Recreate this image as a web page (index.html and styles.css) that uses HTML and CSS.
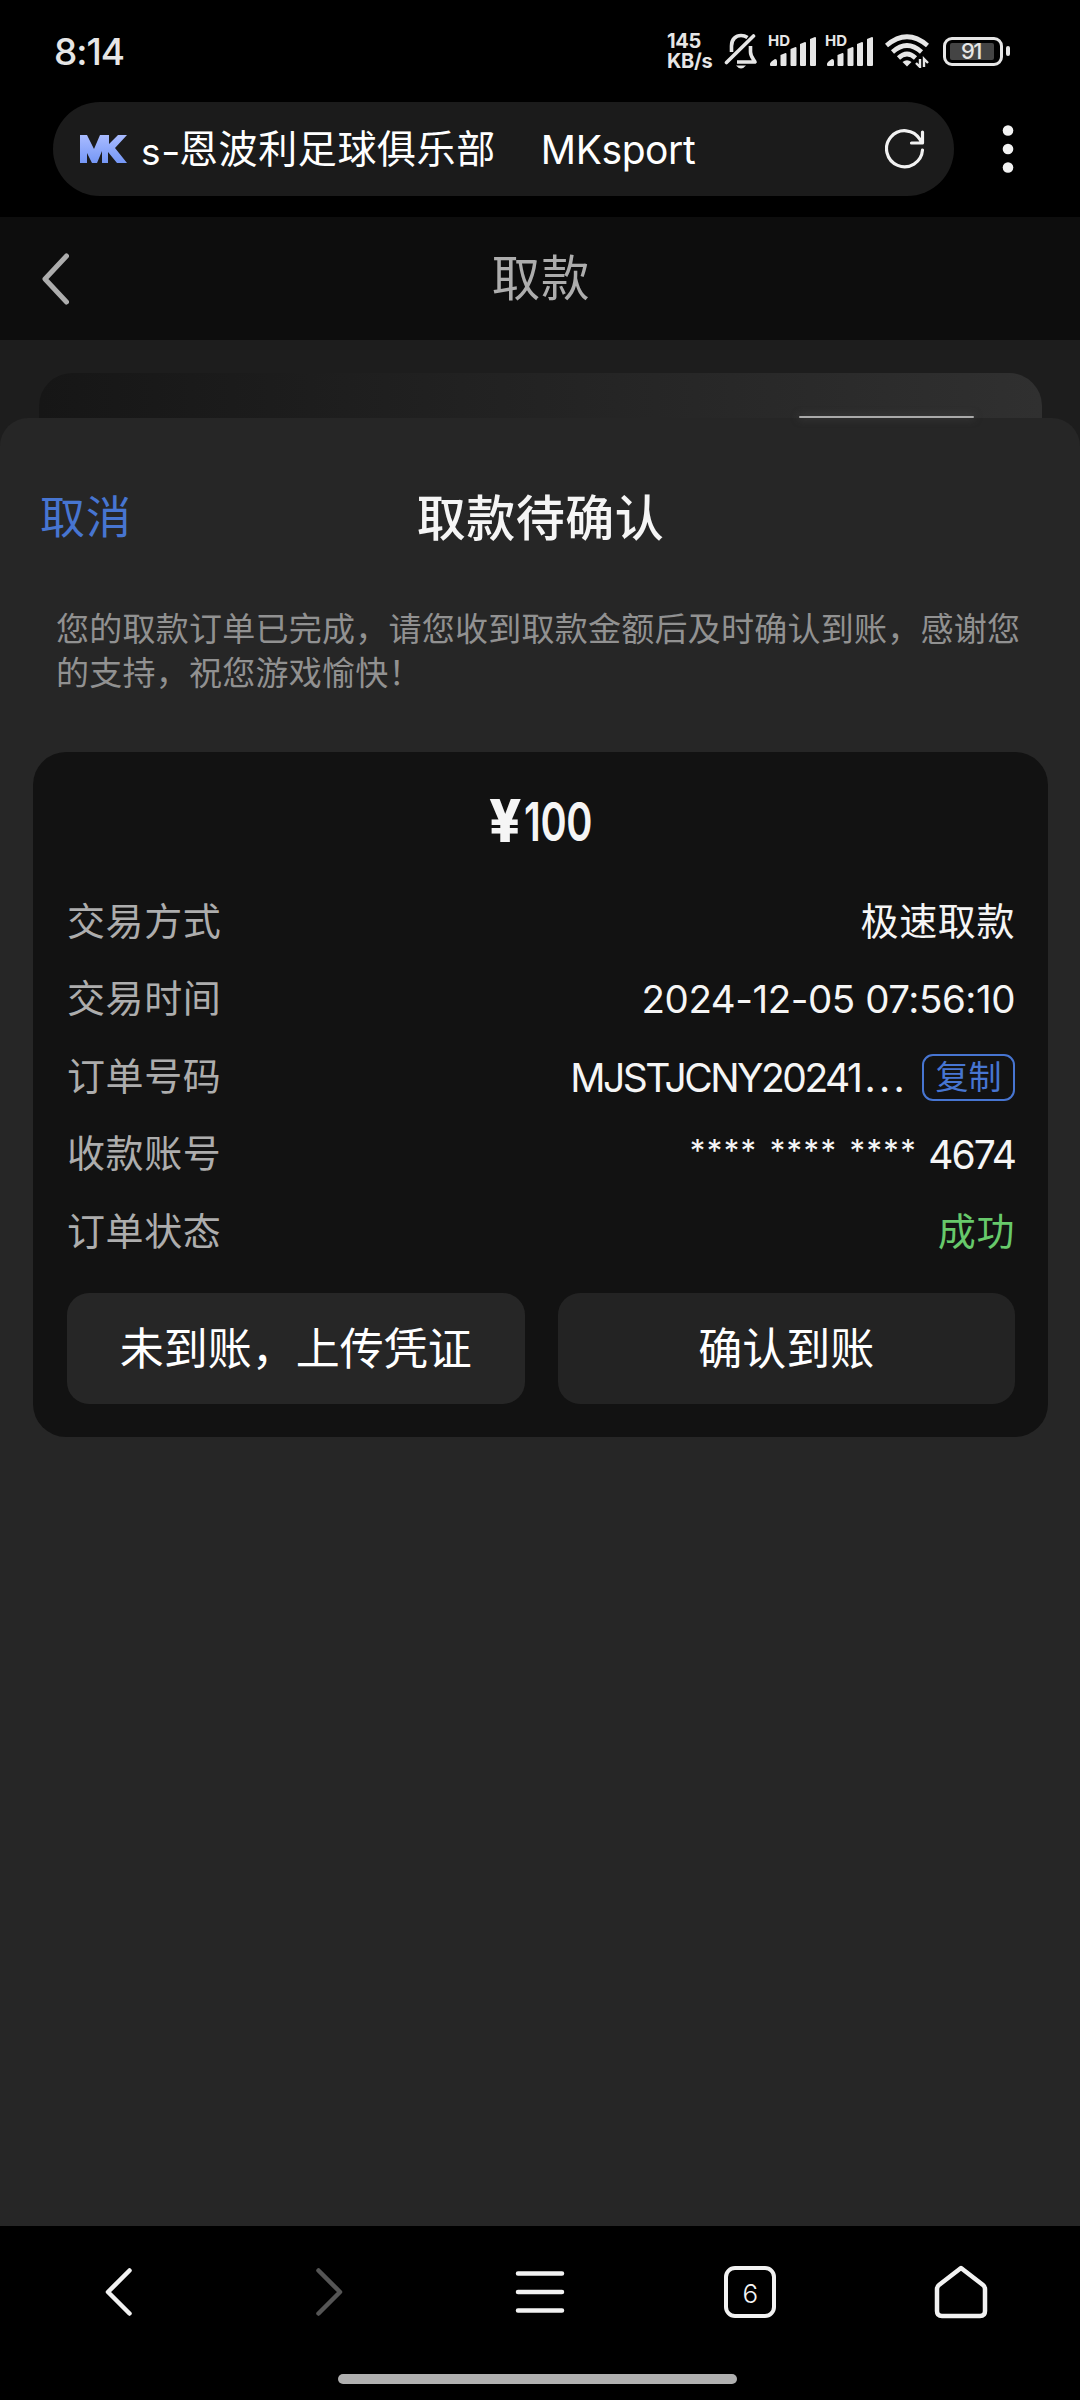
FILE: index.html
```html
<!DOCTYPE html>
<html lang="zh-CN">
<head>
<meta charset="utf-8">
<title>取款</title>
<link rel="stylesheet" href="styles.css">
</head>
<body>
<div class="screen">
  <div class="status">
    <span class="clock">8:14</span>
    <div class="status-icons">
      <div class="speed"><span>145</span><span>KB/s</span></div>
      <svg class="bell" width="34" height="38" viewBox="0 0 34 38" fill="none" stroke="#e6e6e6" stroke-width="3.6" stroke-linecap="round" stroke-linejoin="round">
        <path d="M7.500 20V14C7.500 7 12 3.500 17 3.500c3 0 4.500.6 6.500 2M26.500 14v6c0 4 2 6 4.500 10H13" stroke-linecap="butt"/>
        <path d="M2.500 30.500L29.500 4"/><path d="M12 33.500h10q-5 6-10 0z" fill="#e6e6e6" stroke="none"/>
      </svg>
      <div class="signal"><span class="hd">HD</span><svg width="48" height="32" viewBox="0 0 48 32" fill="#e6e6e6"><path d="M2 29q0-2 5-5q2 0 2 2v4q0 1-1 1H3q-1 0-1-1zM12.500 20l5-2q1 0 1 1v11q0 1-1 1h-4q-1 0-1-1zM22.500 14l5-2q1 0 1 1v17q0 1-1 1h-4q-1 0-1-1zM32 9l5-2q1 0 1 1v22q0 1-1 1h-4q-1 0-1-1zM42 4l5-2q1 0 1 1v27q0 1-1 1h-4q-1 0-1-1z"/></svg></div>
      <div class="signal"><span class="hd">HD</span><svg width="48" height="32" viewBox="0 0 48 32" fill="#e6e6e6"><path d="M2 29q0-2 5-5q2 0 2 2v4q0 1-1 1H3q-1 0-1-1zM12.500 20l5-2q1 0 1 1v11q0 1-1 1h-4q-1 0-1-1zM22.500 14l5-2q1 0 1 1v17q0 1-1 1h-4q-1 0-1-1zM32 9l5-2q1 0 1 1v22q0 1-1 1h-4q-1 0-1-1zM42 4l5-2q1 0 1 1v27q0 1-1 1h-4q-1 0-1-1z"/></svg></div>
      <svg class="wifi" width="44" height="34" viewBox="0 0 44 34" fill="none" stroke="#e6e6e6" stroke-width="4.6">
        <path d="M1.500 11.500Q22-6 42.500 11.500M7.500 18Q22 5 36.500 18M13.500 24Q22 16 30.500 24"/>
        <path d="M17.500 28q4.500-3.500 9 0L22 32.500z" fill="#e6e6e6" stroke="none"/>
        <path d="M35 25v8l-4-4M39 33v-8l4 4" stroke-width="2.400"/>
      </svg>
      <div class="battery"><div class="cell"><span>91</span></div><i></i></div>
    </div>
  </div>

  <div class="browser-bar">
    <div class="url">
      <svg width="48" height="28" viewBox="0 0 48 28"><defs><linearGradient id="mk" x1="0" y1="0" x2="0" y2="1"><stop offset="0" stop-color="#a9bbff"/><stop offset="1" stop-color="#7597f6"/></linearGradient></defs><path fill="url(#mk)" d="M0 0h7l7 14 6-14h9v9L38 0h9L35 13l12 15H37l-9-11v11h-6V16l-5 12h-5L7 18v10H0z"/></svg>
      <span class="url-text"><span class="s">s<span class="dash">-</span></span><span class="club">恩波利足球俱乐部</span></span>
      <span class="site">MKsport</span>
      <svg class="reload" width="40" height="40" viewBox="0 0 40 40" fill="none" stroke="#f2f2f2" stroke-width="3.2" stroke-linecap="round" stroke-linejoin="round"><path d="M37.500 21A18 18 0 1 1 35 10.500l2 3M37.500 3v11H26.500"/></svg>
    </div>
    <svg class="more" width="12" height="48" viewBox="0 0 12 48" fill="#f2f2f2"><circle cx="6" cy="5.500" r="5.300"/><circle cx="6" cy="24" r="5.300"/><circle cx="6" cy="42.500" r="5.300"/></svg>
  </div>

  <header class="page-head">
    <svg width="30" height="52" viewBox="0 0 30 52" fill="none" stroke="#adadad" stroke-width="5" stroke-linecap="round" stroke-linejoin="round"><path d="M27.500 3L6 26l21.500 23"/></svg>
    <h1>取款</h1>
  </header>

  <main class="page">
    <div class="bank-card"><i></i></div>
    <section class="sheet">
      <div class="sheet-head"><a class="cancel">取消</a><h2>取款待确认</h2></div>
      <p class="notice">您的取款订单已完成，请您收到取款金额后及时确认到账，感谢您的支持，祝您游戏愉快！</p>
      <div class="order">
        <div class="amount"><span class="yen">¥</span><span class="num">100</span></div>
        <dl>
          <div class="row"><dt>交易方式</dt><dd class="cn">极速取款</dd></div>
          <div class="row"><dt>交易时间</dt><dd class="date">2024-12-05 07:56:10</dd></div>
          <div class="row"><dt>订单号码</dt><dd><span class="code">MJSTJCNY20241<span class="dots">...</span></span><button class="copy">复制</button></dd></div>
          <div class="row"><dt>收款账号</dt><dd><span class="stars">**** **** ****</span><span class="last">4674</span></dd></div>
          <div class="row"><dt>订单状态</dt><dd class="cn ok">成功</dd></div>
        </dl>
        <div class="actions"><button class="btn">未到账，上传凭证</button><button class="btn second">确认到账</button></div>
      </div>
    </section>
  </main>

  <footer class="bottom">
    <nav>
      <svg width="56" height="56" viewBox="0 0 56 56"><path d="M38.500 6.500L17 28l21.500 21.500"/></svg>
      <svg class="off" width="56" height="56" viewBox="0 0 56 56"><path d="M16.500 6.500L38 28 16.500 49.500"/></svg>
      <svg width="56" height="56" viewBox="0 0 56 56"><path d="M6 9.500h44M6 28h44M6 46.500h44"/></svg>
      <div class="tabs"><span>6</span></div>
      <svg width="56" height="56" viewBox="0 0 56 56"><path d="M28 4L50 21q2 1.500 2 4v22q0 5-5 5H9q-5 0-5-5V25q0-2.500 2-4z"/></svg>
    </nav>
    <div class="handle"></div>
  </footer>
</div>
</body>
</html>
```
FILE: styles.css
```css
* { box-sizing: border-box; }
body { margin: 0; background: #000; font-family: Inter, "Noto Sans CJK SC", sans-serif; color: #f5f5f5; }
h1, h2, p, dl, dd { margin: 0; font-weight: 400; }
button { font: inherit; color: inherit; border: 0; padding: 0; background: none; }
svg { flex: none; display: block; }
.screen { width: 1080px; height: 2400px; display: flex; flex-direction: column; overflow: hidden; }

.status { height: 102px; padding: 0 70px 0 54px; display: flex; justify-content: space-between; align-items: center; color: #e6e6e6; }
.clock { font-size: 37px; font-weight: 500; letter-spacing: -1px; }
.status-icons { display: flex; align-items: center; }
.speed { display: flex; flex-direction: column; gap: 1px; font-size: 20px; line-height: 19px; font-weight: 700; letter-spacing: -0.3px; width: 57px; }
.bell { margin-right: -1px; }
.signal { position: relative; width: 48px; margin-left: 11px; }
.signal + .signal { margin-left: 9px; }
.hd { position: absolute; left: 0; top: 0; font-size: 15px; line-height: 12px; font-weight: 700; }
.wifi { margin-left: 12px; }
.battery { display: flex; align-items: center; margin-left: 14px; gap: 3px; }
.cell { width: 60px; height: 29px; border: 3px solid #e6e6e6; border-radius: 9px; padding: 3px 4px; }
.cell span { display: block; width: 44px; height: 17px; background: #444; font-size: 22px; line-height: 17px; font-weight: 500; letter-spacing: -1.5px; padding-left: 11px; border-radius: 2px; }
.battery i { width: 4px; height: 10px; border-radius: 2px; background: #e6e6e6; }

.browser-bar { height: 115px; padding-left: 53px; display: flex; align-items: flex-start; }
.url { width: 901px; height: 94px; border-radius: 47px; background: #1b1b1b; padding: 0 29px 0 27px; display: flex; align-items: center; color: #fff; }
.url-text { margin-left: 13px; display: flex; align-items: center; font-size: 39px; }
.s { font-size: 37px; width: 38px; padding-top: 4px; display: flex; }
.dash { transform: scaleX(1.15); transform-origin: left; }
.club { letter-spacing: 0.6px; line-height: 56px; }
.site { margin-left: 45px; font-size: 39px; letter-spacing: -0.4px; }
.reload { margin-left: auto; }
.more { margin: 23px 0 0 48px; }

.page-head { height: 123px; background: #0d0d0d; padding-left: 39px; display: grid; grid-template-columns: 40px 1fr 77px; align-items: center; color: #adadad; }
.page-head h1 { font-size: 48.5px; text-align: center; line-height: 60px; letter-spacing: 0.8px; }

.page { height: 1886px; background: #1d1d1d; padding-top: 33px; }
.bank-card { height: 45px; margin: 0 38px 0 39px; border-radius: 33px 33px 0 0; background: linear-gradient(90deg, #161616, #232323 50%, #303030); display: flex; align-items: flex-end; justify-content: flex-end; padding-right: 68px; }
.bank-card i { width: 175px; height: 2px; background: #aaa; box-shadow: 0 0 8px #555; border-radius: 2px; }
.sheet { height: 1808px; background: #262626; border-radius: 28px 28px 0 0; padding: 57px 32px 0 33px; }
.sheet-head { height: 78px; display: grid; grid-template-columns: 200px 1fr 200px; align-items: center; }
.cancel { padding-left: 7px; color: #4775d1; font-size: 45px; letter-spacing: 1px; }
.sheet-head h2 { text-align: center; font-size: 49px; font-weight: 500; letter-spacing: 0.5px; }
.notice { margin: 54px 0 0 23px; width: 980px; font-size: 33px; line-height: 44px; letter-spacing: 0.25px; color: #919191; }
.order { margin-top: 57px; height: 685px; border-radius: 33px; background: #121212; padding: 28px 33px 33px 34px; display: flex; flex-direction: column; }
.amount { height: 84px; padding-right: 3px; display: flex; justify-content: center; align-items: center; }
.yen { width: 35px; font-size: 59px; line-height: 84px; padding-bottom: 3px; font-weight: 800; transform: scaleX(0.95); transform-origin: left; }
.num { width: 66px; font-size: 54px; line-height: 84px; font-weight: 600; letter-spacing: -0.5px; transform: scaleX(0.735); transform-origin: left; }
dl { padding-top: 20px; }
.row { height: 77.5px; display: flex; align-items: center; justify-content: space-between; font-size: 38px; }
.row dt { color: #adadad; letter-spacing: 0.6px; padding-bottom: 9px; }
.row dd { display: flex; align-items: center; }
.row .cn { padding-bottom: 9px; letter-spacing: 0.6px; }
.date { font-size: 38.5px; letter-spacing: -0.45px; padding-bottom: 2px; }
.code { font-size: 39px; letter-spacing: -2.5px; }
.dots { letter-spacing: 3.3px; margin-left: 4px; }
.copy { width: 93px; height: 47px; margin-left: 14px; border: 2px solid #4775d1; border-radius: 11px; color: #4775d1; font-size: 33px; line-height: 42px; }
.row:nth-child(3) dd, .row:nth-child(4) dd { padding-bottom: 1px; }
.stars { font-size: 31px; letter-spacing: 1.4px; word-spacing: 2px; padding-bottom: 8px; }
.last { margin-left: 11px; font-size: 39px; letter-spacing: -1.9px; padding-bottom: 1px; }
.row .ok { color: #67c96b; }
.actions { margin-top: auto; display: grid; grid-template-columns: 1fr 1fr; gap: 33px; }
.btn { height: 111px; border-radius: 22px; background: #262626; font-size: 44px; color: #fff; padding-bottom: 6px; }
.second { background: #232323; }

.bottom { flex: 1; }
nav { height: 132px; padding: 0 14px; display: grid; grid-template-columns: repeat(5, 1fr); justify-items: center; align-items: center; }
nav svg { fill: none; stroke: #f2f2f2; stroke-width: 4.5; stroke-linecap: round; stroke-linejoin: round; }
nav .off { stroke: #555; }
.tabs { width: 52px; height: 52px; border: 4.5px solid #f2f2f2; border-radius: 11px; display: flex; align-items: center; justify-content: center; font-size: 26px; font-weight: 300; padding-top: 3px; }
.handle { width: 399px; height: 10px; border-radius: 5px; background: #b0b0b0; margin: 16px 0 0 338px; }
```
